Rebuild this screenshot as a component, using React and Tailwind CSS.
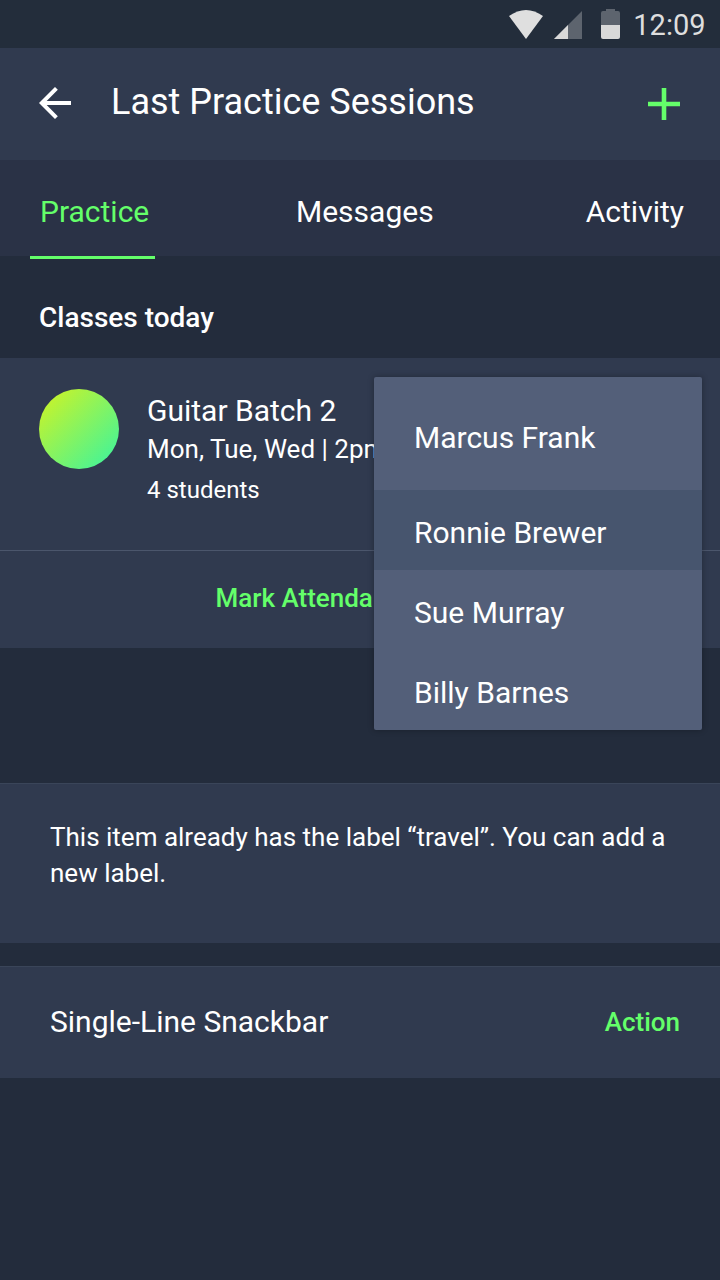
function StatusBar() {
  return (
    <div className="flex h-12 items-start justify-end bg-[#232d3b] text-[#dedede]">
      <svg className="mt-[10px] h-[30px] w-[34px]" viewBox="0 0 34 30">
        <path d="M0 6Q17-6 34 6L17 29Z" fill="#dfdfdf" />
      </svg>
      <svg className="mt-[11px] ml-[11px] h-7 w-7" viewBox="0 0 28 28">
        <path d="M28 0V28H0Z" fill="#5d646e" />
        <path d="M14 14V28H0Z" fill="#d9d9d9" />
      </svg>
      <svg className="mt-[9px] ml-[18px] h-[30px] w-5" viewBox="0 0 20 30">
        <path d="M6 0h9v2H18a2 2 0 0 1 2 2v12H1V4a2 2 0 0 1 2-2h3Z" fill="#5d646e" />
        <path d="M1 16h19v12a2 2 0 0 1-2 2H3a2 2 0 0 1-2-2Z" fill="#d9d9d9" />
      </svg>
      <span className="mt-[5px] mr-[14.5px] ml-[13px] text-[29px] leading-[41px]">12:09</span>
    </div>
  );
}

const people = ["Sue Murray", "Billy Barnes"];

export default function App() {
  return (
    <main className="relative h-[1280px] w-[720px] overflow-hidden bg-[#232c3c] font-['Roboto',sans-serif] text-white">
      <StatusBar />
      <header className="flex h-28 items-center bg-[#303a4f] pl-[39px] pr-10">
        <svg className="mb-[2px] h-8 w-8" viewBox="0 0 32 32" fill="none" stroke="white" strokeWidth="4">
          <path d="M32 16H4M17.4 1.4L2.8 16l14.6 14.6" />
        </svg>
        <h1 className="ml-10 flex-1 pb-[3px] text-[36px] leading-[45px]">Last Practice Sessions</h1>
        <svg className="h-8 w-8" viewBox="0 0 32 32" stroke="#64ff6a" strokeWidth="4.6">
          <path d="M16 0v32M0 16h32" />
        </svg>
      </header>
      <nav className="flex h-24 bg-[#2a3246] text-[30px] leading-10">
        <div className="ml-[30px] h-[99px] w-[125px] shrink-0 border-b-[3px] border-[#64ff6a] pt-8 pl-[10px] text-[#64ff6a]">Practice</div>
        <div className="ml-[141px] pt-8">Messages</div>
        <div className="mr-9 ml-auto pt-8">Activity</div>
      </nav>
      <h2 className="h-[102px] pt-[42px] pl-[39px] text-[28px] leading-10 font-medium">Classes today</h2>
      <section className="h-[290px] bg-[#303a4f]">
        <div className="flex h-[193px] border-b border-[#4b566c] pl-[39px]">
          <div className="mt-[31px] h-20 w-20 rounded-full bg-[linear-gradient(135deg,#d5f31f,#36f4a3)]" />
          <div className="ml-7 pt-[33px] whitespace-nowrap">
            <p className="text-[30px] leading-10">Guitar Batch 2</p>
            <p className="text-[26px] leading-9">Mon, Tue, Wed | 2pm</p>
            <p className="pt-[2px] text-[24px] leading-[42px]">4 students</p>
          </div>
        </div>
        <button className="ml-[215.5px] pt-[27px] text-[26px] leading-10 font-medium text-[#64ff6a]">Mark Attenda</button>
      </section>
      <section className="mt-[135px] h-40 border-t border-[#3a4559] bg-[#303a4f] pt-[35px] pl-[50px] text-[26px] leading-9">
        <p>This item already has the label “travel”. You can add a<br />new label.</p>
      </section>
      <section className="mt-[23px] flex h-28 items-center border-t border-[#3a4559] bg-[#303a4f] pr-10 pb-[2px] pl-[50px]">
        <span className="flex-1 text-[30px] leading-10">Single-Line Snackbar</span>
        <button className="text-[26px] leading-10 font-medium text-[#64ff6a]">Action</button>
      </section>
      <div className="absolute top-[377px] left-[374px] h-[353px] w-[328px] rounded-[2px] bg-[#535f79] text-[30px] leading-[80px] shadow-[0_0_6px_rgba(0,0,0,0.3)]">
        <div className="h-[113px] pt-[21px] pl-10">Marcus Frank</div>
        <div className="h-20 bg-[#47556e] pt-[3px] pl-10">Ronnie Brewer</div>
        {people.map((name) => (
          <div key={name} className="h-20 pt-[3px] pl-10">{name}</div>
        ))}
      </div>
    </main>
  );
}
